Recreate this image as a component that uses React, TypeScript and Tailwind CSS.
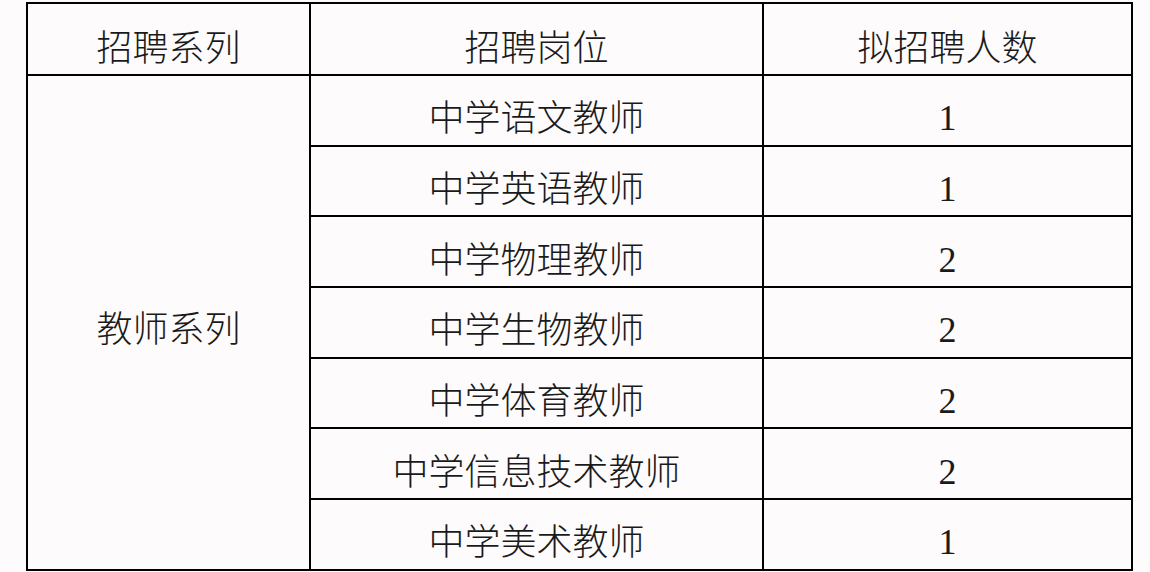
const ROWS = [
  { gangwei: "中学语文教师", renshu: 1 },
  { gangwei: "中学英语教师", renshu: 1 },
  { gangwei: "中学物理教师", renshu: 2 },
  { gangwei: "中学生物教师", renshu: 2 },
  { gangwei: "中学体育教师", renshu: 2 },
  { gangwei: "中学信息技术教师", renshu: 2 },
  { gangwei: "中学美术教师", renshu: 1 },
];

const cjk = "font-['Noto_Sans_CJK_SC',sans-serif] font-light";
const num = "font-['Liberation_Serif','Times_New_Roman',serif]";

export default function App() {
  return (
    <div className="min-h-screen w-full bg-[#fdfbfc] pt-[2px] pl-[26px] text-[#1a1a1a]">
      <table className="table-fixed border-collapse w-[1105px]">
        <colgroup>
          <col className="w-[283px]" />
          <col className="w-[453px]" />
          <col className="w-[369px]" />
        </colgroup>
        <thead>
          <tr className="h-[72px]">
            <th className={`border-2 border-black p-0 pt-[12px] text-[36px] leading-[36px] font-light ${cjk}`}>招聘系列</th>
            <th className={`border-2 border-black p-0 pt-[12px] text-[36px] leading-[36px] font-light ${cjk}`}>招聘岗位</th>
            <th className={`border-2 border-black p-0 pt-[12px] text-[36px] leading-[36px] font-light ${cjk}`}>拟招聘人数</th>
          </tr>
        </thead>
        <tbody>
          {ROWS.map((row, i) => (
            <tr key={row.gangwei} className="h-[70.7px]">
              {i === 0 && (
                <td
                  rowSpan={ROWS.length}
                  className={`border-2 border-black p-0 pt-[8px] text-center text-[36px] leading-[36px] ${cjk}`}
                >
                  教师系列
                </td>
              )}
              <td className={`border-2 border-black p-0 pt-[10px] text-center text-[36px] leading-[36px] ${cjk}`}>
                {row.gangwei}
              </td>
              <td className={`border-2 border-black p-0 pt-[16px] text-center text-[36px] leading-[36px] ${num}`}>
                {row.renshu}
              </td>
            </tr>
          ))}
        </tbody>
      </table>
    </div>
  );
}
